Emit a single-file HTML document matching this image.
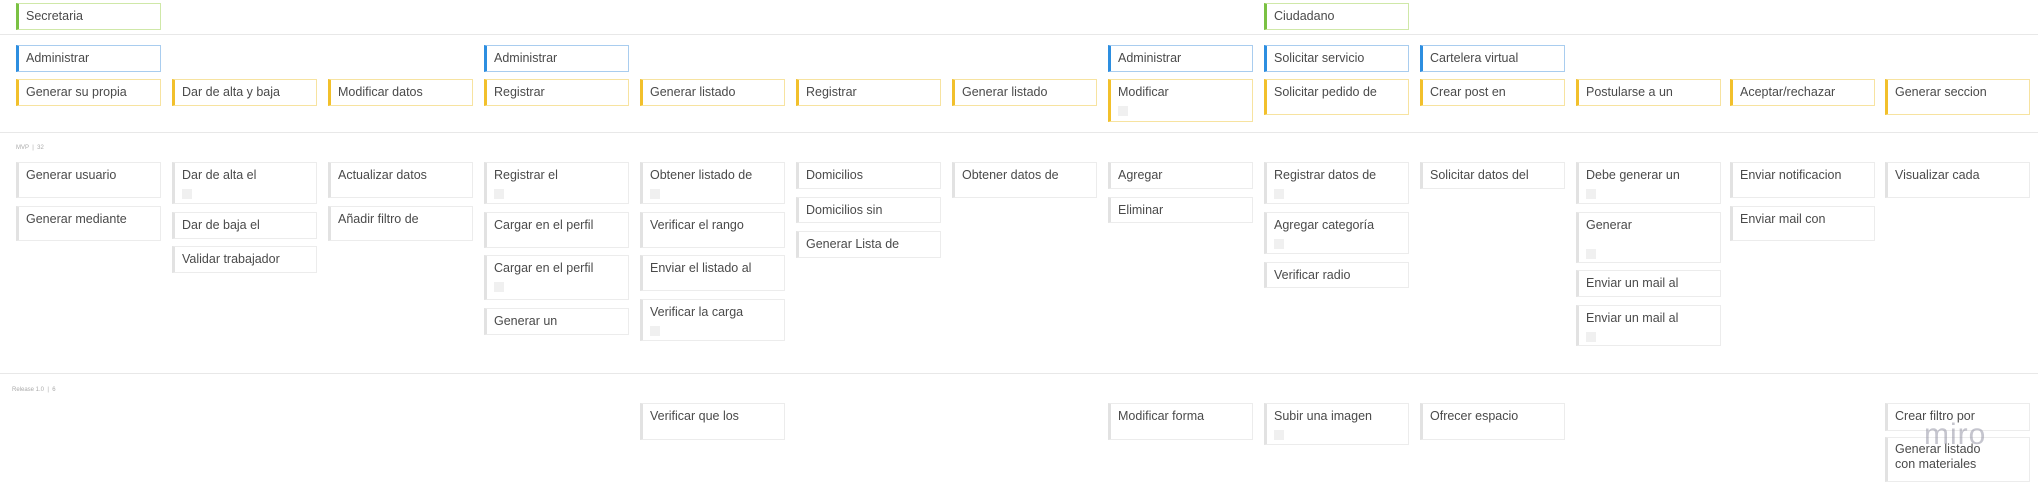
<!DOCTYPE html>
<html><head><meta charset="utf-8"><style>
body{margin:0;width:2038px;height:490px;background:#fff;position:relative;overflow:hidden;font-family:"Liberation Sans",sans-serif}
.c{position:absolute;box-sizing:border-box;width:145px;border:1px solid #ececec;border-left:3px solid #e2e2e2;background:#fff;font-size:12.5px;color:#4a4a4a;padding:4px 0 0 7px;line-height:16px;white-space:nowrap;overflow:hidden}
.y{border-color:#f7e3a0;border-left-color:#f2c02b}
.b{border-color:#a9cdef;border-left-color:#2d8ee0}
.g{border-color:#cfe8a8;border-left-color:#7ac143}
.k::after{content:"";display:block;width:10px;height:10px;background:#f0f0f0;margin-top:6px}
.sep{position:absolute;left:0;width:2038px;height:1px;background:#e8e8e8}
.lbl{position:absolute;font-size:6px;color:#aaa}
</style></head><body>
<div class="c g" style="left:16px;top:3px;height:27px">Secretaria</div>
<div class="c g" style="left:1264px;top:3px;height:27px">Ciudadano</div>
<div class="sep" style="top:34px"></div>

<div class="c b" style="left:16px;top:45px;height:27px">Administrar</div>
<div class="c b" style="left:484px;top:45px;height:27px">Administrar</div>
<div class="c b" style="left:1108px;top:45px;height:27px">Administrar</div>
<div class="c b" style="left:1264px;top:45px;height:27px">Solicitar servicio</div>
<div class="c b" style="left:1420px;top:45px;height:27px">Cartelera virtual</div>

<div class="c y" style="left:16px;top:79px;height:27px">Generar su propia</div>
<div class="c y" style="left:172px;top:79px;height:27px">Dar de alta y baja</div>
<div class="c y" style="left:328px;top:79px;height:27px">Modificar datos</div>
<div class="c y" style="left:484px;top:79px;height:27px">Registrar</div>
<div class="c y" style="left:640px;top:79px;height:27px">Generar listado</div>
<div class="c y" style="left:796px;top:79px;height:27px">Registrar</div>
<div class="c y" style="left:952px;top:79px;height:27px">Generar listado</div>
<div class="c y k" style="left:1108px;top:79px;height:43px">Modificar</div>
<div class="c y" style="left:1264px;top:79px;height:36px">Solicitar pedido de</div>
<div class="c y" style="left:1420px;top:79px;height:27px">Crear post en</div>
<div class="c y" style="left:1576px;top:79px;height:27px">Postularse a un</div>
<div class="c y" style="left:1730px;top:79px;height:27px">Aceptar/rechazar</div>
<div class="c y" style="left:1885px;top:79px;height:36px">Generar seccion</div>
<div class="sep" style="top:132px"></div>
<div class="lbl" style="left:16px;top:145px">MVP &nbsp;|&nbsp; 32</div>

<div class="c" style="left:16px;top:162px;height:36px">Generar usuario</div>
<div class="c" style="left:16px;top:206px;height:35px">Generar mediante</div>
<div class="c k" style="left:172px;top:162px;height:42px">Dar de alta el</div>
<div class="c" style="left:172px;top:212px;height:27px">Dar de baja el</div>
<div class="c" style="left:172px;top:246px;height:27px">Validar trabajador</div>
<div class="c" style="left:328px;top:162px;height:36px">Actualizar datos</div>
<div class="c" style="left:328px;top:206px;height:35px">Añadir filtro de</div>
<div class="c k" style="left:484px;top:162px;height:42px">Registrar el</div>
<div class="c" style="left:484px;top:212px;height:36px">Cargar en el perfil</div>
<div class="c k" style="left:484px;top:255px;height:45px">Cargar en el perfil</div>
<div class="c" style="left:484px;top:308px;height:27px">Generar un</div>
<div class="c k" style="left:640px;top:162px;height:42px">Obtener listado de</div>
<div class="c" style="left:640px;top:212px;height:36px">Verificar el rango</div>
<div class="c" style="left:640px;top:255px;height:36px">Enviar el listado al</div>
<div class="c k" style="left:640px;top:299px;height:42px">Verificar la carga</div>
<div class="c" style="left:796px;top:162px;height:27px">Domicilios</div>
<div class="c" style="left:796px;top:197px;height:26px">Domicilios sin</div>
<div class="c" style="left:796px;top:231px;height:27px">Generar Lista de</div>
<div class="c" style="left:952px;top:162px;height:36px">Obtener datos de</div>
<div class="c" style="left:1108px;top:162px;height:27px">Agregar</div>
<div class="c" style="left:1108px;top:197px;height:26px">Eliminar</div>
<div class="c k" style="left:1264px;top:162px;height:42px">Registrar datos de</div>
<div class="c k" style="left:1264px;top:212px;height:42px">Agregar categoría</div>
<div class="c" style="left:1264px;top:262px;height:26px">Verificar radio</div>
<div class="c" style="left:1420px;top:162px;height:27px">Solicitar datos del</div>
<div class="c k" style="left:1576px;top:162px;height:42px">Debe generar un</div>
<div class="c" style="left:1576px;top:212px;height:51px">Generar<div style="width:10px;height:10px;background:#f0f0f0;margin-top:16px"></div></div>
<div class="c" style="left:1576px;top:270px;height:27px">Enviar un mail al</div>
<div class="c k" style="left:1576px;top:305px;height:41px">Enviar un mail al</div>
<div class="c" style="left:1730px;top:162px;height:36px">Enviar notificacion</div>
<div class="c" style="left:1730px;top:206px;height:35px">Enviar mail con</div>
<div class="c" style="left:1885px;top:162px;height:36px">Visualizar cada</div>

<div class="sep" style="top:373px"></div>
<div class="lbl" style="left:12px;top:387px">Release 1.0 &nbsp;|&nbsp; 6</div>
<div class="c" style="left:640px;top:403px;height:37px">Verificar que los</div>
<div class="c" style="left:1108px;top:403px;height:37px">Modificar forma</div>
<div class="c k" style="left:1264px;top:403px;height:42px">Subir una imagen</div>
<div class="c" style="left:1420px;top:403px;height:37px">Ofrecer espacio</div>
<div class="c" style="left:1885px;top:403px;height:28px">Crear filtro por</div>
<div class="c" style="left:1885px;top:437px;height:45px;line-height:15px">Generar listado<br>con materiales</div>
<div style="position:absolute;left:1924px;top:418px;font-size:30px;color:rgba(150,150,165,0.55);letter-spacing:1px">miro</div>
</body></html>
